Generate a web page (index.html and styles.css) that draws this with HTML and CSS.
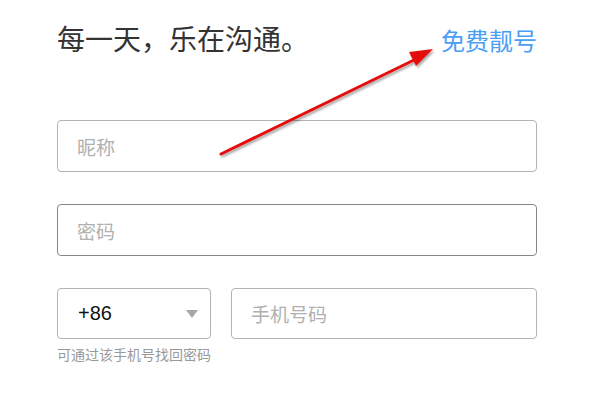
FILE: index.html
```html
<!DOCTYPE html>
<html lang="zh-CN">
<head>
  <meta charset="UTF-8">
  <meta name="viewport" content="width=device-width, initial-scale=1.0">
  <title>注册</title>
  <link rel="stylesheet" href="styles.css">
</head>
<body>

<div class="signup">
  <div class="signup-head">
    <h1>每一天，乐在沟通。</h1>
    <a href="#" class="lucky-num">免费靓号</a>
  </div>

  <form class="signup-form">
    <input type="text" class="field" placeholder="昵称">
    <input type="password" class="field field-active" placeholder="密码">

    <div class="phone-row">
      <div class="phone-code">
        <div class="code-select">
          <span>+86</span>
          <span class="caret"></span>
        </div>
        <p class="hint">可通过该手机号找回密码</p>
      </div>
      <input type="text" class="field phone-input" placeholder="手机号码">
    </div>
  </form>
</div>

<!-- annotation arrow -->
<svg class="arrow" width="600" height="400" viewBox="0 0 600 400">
  <defs>
    <filter id="shadow" x="-20%" y="-20%" width="140%" height="140%">
      <feDropShadow dx="1.5" dy="2" stdDeviation="1.2" flood-color="#000" flood-opacity="0.35"/>
    </filter>
  </defs>
  <g filter="url(#shadow)">
    <line x1="221" y1="154" x2="414" y2="60" stroke="#e3100f" stroke-width="3" stroke-linecap="round"/>
    <polygon points="433,49 409,52 416,66" fill="#e3100f"/>
  </g>
</svg>

</body>
</html>
```

FILE: styles.css
```css
/* General */
body {
  margin: 0;
  background: #fff;
  font-family: "Microsoft YaHei", "Noto Sans CJK SC", "Liberation Sans", sans-serif;
  color: #333;
}

.signup {
  width: 480px;
  padding: 21px 0 0 57px;
}

/* Header */
.signup-head {
  display: flex;
  justify-content: space-between;
  align-items: baseline;
}

.signup-head h1 {
  margin: 0;
  font-size: 28px;
  font-weight: normal;
  line-height: 34px;
  color: #333;
}

.lucky-num {
  font-size: 24px;
  color: #4a9ff5;
  text-decoration: none;
}

/* Form */
.signup-form {
  display: flex;
  flex-direction: column;
  gap: 32px;
  margin-top: 63px;
}

.field {
  box-sizing: border-box;
  width: 100%;
  height: 52px;
  padding: 0 19px;
  border: 1px solid #b3b3b3;
  border-radius: 4px;
  font-family: inherit;
  font-size: 19px;
  color: #333;
  outline: none;
}

.field::placeholder {
  color: #b0b0b0;
}

.field-active {
  border-color: #868686;
}

.phone-row {
  display: flex;
  gap: 20px;
  align-items: flex-start;
}

.phone-code {
  width: 154px;
  flex-shrink: 0;
}

.code-select {
  box-sizing: border-box;
  height: 51px;
  display: flex;
  justify-content: space-between;
  align-items: center;
  padding: 0 12px 0 20px;
  border: 1px solid #b3b3b3;
  border-radius: 4px;
  font-family: "Liberation Sans", Arial, sans-serif;
  font-size: 20px;
  color: #111;
}

.caret {
  width: 0;
  height: 0;
  border-left: 6px solid transparent;
  border-right: 6px solid transparent;
  border-top: 8px solid #a6a6a6;
}

.hint {
  margin: 5px 0 0;
  font-size: 14px;
  color: #999;
  white-space: nowrap;
}

.phone-input {
  flex: 1;
  height: 51px;
}

/* Annotation */
.arrow {
  position: absolute;
  top: 0;
  left: 0;
  pointer-events: none;
}
```
